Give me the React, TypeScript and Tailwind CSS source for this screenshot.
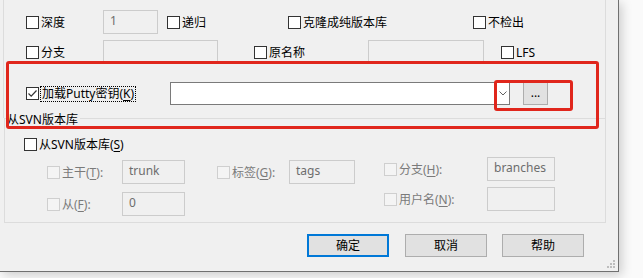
import React from 'react';

function Box({ checked = false, disabled = false }: { checked?: boolean; disabled?: boolean }) {
  return (
    <span
      className={`w-[13px] h-[13px] shrink-0 border flex items-center justify-center ${
        disabled ? 'border-[#cfcfcf] bg-[#f4f4f4]' : 'border-[#333333] bg-white'
      }`}
    >
      {checked && (
        <svg width="11" height="11" viewBox="0 0 11 11">
          <path d="M1.5 5.5 L4.2 8.2 L9.5 2.5" fill="none" stroke="#333" strokeWidth="1.2" />
        </svg>
      )}
    </span>
  );
}

function Check({
  label,
  width,
  checked,
  disabled,
  className = '',
}: {
  label: React.ReactNode;
  width?: string;
  checked?: boolean;
  disabled?: boolean;
  className?: string;
}) {
  return (
    <div className={`flex items-center shrink-0 ${width ?? ''} ${className}`}>
      <Box checked={checked} disabled={disabled} />
      <span className={`ml-[2px] pt-[1px] whitespace-nowrap ${disabled ? 'text-[#7a7a7a]' : 'text-black'}`}>{label}</span>
    </div>
  );
}

function Field({ value = '', width, className = '' }: { value?: string; width: string; className?: string }) {
  return (
    <div
      className={`${width} h-[24px] shrink-0 border border-[#cccccc] bg-[#f0f0f0] px-[6px] pt-[2px] text-[#6d6d6d] ${className}`}
    >
      {value}
    </div>
  );
}

function U({ c }: { c: string }) {
  return <span className="underline underline-offset-2">{c}</span>;
}

function Btn({ label, primary }: { label: string; primary?: boolean }) {
  return (
    <div
      className={`w-[82px] h-[23px] flex items-center justify-center bg-[#e1e1e1] ${
        primary ? 'border-2 border-[#0078d7]' : 'border border-[#adadad]'
      }`}
    >
      {label}
    </div>
  );
}

export default function App() {
  return (
    <div className="w-[643px] h-[278px] bg-[#fafafa] overflow-hidden text-[12px] leading-[16px] font-['Noto_Sans','Noto_Sans_CJK_SC',sans-serif]">
      <div className="relative w-[619px] h-[272px] bg-[#f0f0f0] border-r border-b border-[#707070] shadow-[3px_3px_10px_rgba(0,0,0,0.18)] flex flex-col">
        {/* top section */}
        <div className="ml-[3px] w-[603px] h-[118px] border-x border-[#dcdcdc] pt-[10px]">
          <div className="flex items-center h-[24px] pl-[22px]">
            <Check label="深度" width="w-[77px]" />
            <Field value="1" width="w-[55px]" />
            <Check label="递归" width="w-[121px]" className="ml-[9px]" />
            <Check label="克隆成纯版本库" width="w-[185px]" />
            <Check label="不检出" />
          </div>
          <div className="flex items-center h-[24px] pl-[22px] mt-[6px]">
            <Check label="分支" width="w-[77px]" />
            <Field width="w-[115px]" />
            <Check label="原名称" width="w-[114px]" className="ml-[36px]" />
            <Field width="w-[116px]" />
            <Check label="LFS" className="ml-[17px]" />
          </div>
          <div className="flex items-center h-[23px] pl-[22px] mt-[18px]">
            <div className="flex items-center w-[144px] shrink-0">
              <Box checked />
              <span className="ml-[1px] px-[1px] border border-dotted border-black leading-[14px] whitespace-nowrap">
                加载Putty密钥(<U c="K" />)
              </span>
            </div>
            <div className="w-[340px] h-[23px] border border-[#7a7a7a] bg-white flex justify-end">
              <div className="w-[13px] h-full border-l border-[#9a9a9a] flex items-center justify-center">
                <svg width="8" height="5" viewBox="0 0 8 5">
                  <path d="M0.5 0.5 L4 4 L7.5 0.5" fill="none" stroke="#606060" strokeWidth="1" />
                </svg>
              </div>
            </div>
            <div className="ml-[13px] w-[25px] h-[23px] bg-[#e1e1e1] border border-[#adadad] flex items-center justify-center leading-none pb-[2px]">
              ...
            </div>
          </div>
        </div>

        {/* SVN group */}
        <div className="relative ml-[4px] w-[602px] h-[105px] border border-[#dcdcdc]">
          <div className="absolute -top-[7px] left-[2px] bg-[#f0f0f0] pr-[2px] whitespace-nowrap">从SVN版本库</div>
          <div className="pl-[19px] mt-[18px] h-[14px] flex items-center">
            <Check label={<>从SVN版本库(<U c="S" />)</>} />
          </div>
          <div className="flex pl-[42px] mt-[6px]">
            <div className="flex flex-col pt-[3px]">
              <div className="flex items-center h-[24px]">
                <Check disabled label={<>主干(<U c="T" />):</>} width="w-[75px]" />
                <Field value="trunk" width="w-[63px]" />
              </div>
              <div className="flex items-center h-[24px] mt-[8px]">
                <Check disabled label={<>从(<U c="F" />):</>} width="w-[75px]" />
                <Field value="0" width="w-[63px]" />
              </div>
            </div>
            <div className="flex flex-col pt-[3px] ml-[32px]">
              <div className="flex items-center h-[24px]">
                <Check disabled label={<>标签(<U c="G" />):</>} width="w-[72px]" />
                <Field value="tags" width="w-[66px]" />
              </div>
            </div>
            <div className="flex flex-col ml-[29px]">
              <div className="flex items-center h-[24px]">
                <Check disabled label={<>分支(<U c="H" />):</>} width="w-[103px]" />
                <Field value="branches" width="w-[68px]" />
              </div>
              <div className="flex items-center h-[24px] mt-[6px]">
                <Check disabled label={<>用户名(<U c="N" />):</>} width="w-[103px]" />
                <Field width="w-[68px]" />
              </div>
            </div>
          </div>
        </div>

        {/* buttons */}
        <div className="flex mt-[11px] pl-[307px]">
          <Btn label="确定" primary />
          <div className="ml-[16px]">
            <Btn label="取消" />
          </div>
          <div className="ml-[15px]">
            <Btn label="帮助" />
          </div>
        </div>

        {/* resize grip */}
        <svg className="absolute right-[2px] bottom-[2px]" width="10" height="10" viewBox="0 0 10 10">
          <rect x="7" y="1" width="2" height="2" fill="#bdbdbd" />
          <rect x="4" y="4" width="2" height="2" fill="#bdbdbd" />
          <rect x="7" y="4" width="2" height="2" fill="#bdbdbd" />
          <rect x="1" y="7" width="2" height="2" fill="#bdbdbd" />
          <rect x="4" y="7" width="2" height="2" fill="#bdbdbd" />
          <rect x="7" y="7" width="2" height="2" fill="#bdbdbd" />
        </svg>

        {/* red annotation boxes */}
        <div className="absolute left-[6px] top-[61px] w-[593px] h-[68px] border-[3px] border-[#e0261c] rounded-[3px]" />
        <div className="absolute left-[494px] top-[80px] w-[79px] h-[31px] border-[3px] border-[#e0261c] rounded-[3px]" />
      </div>
    </div>
  );
}
